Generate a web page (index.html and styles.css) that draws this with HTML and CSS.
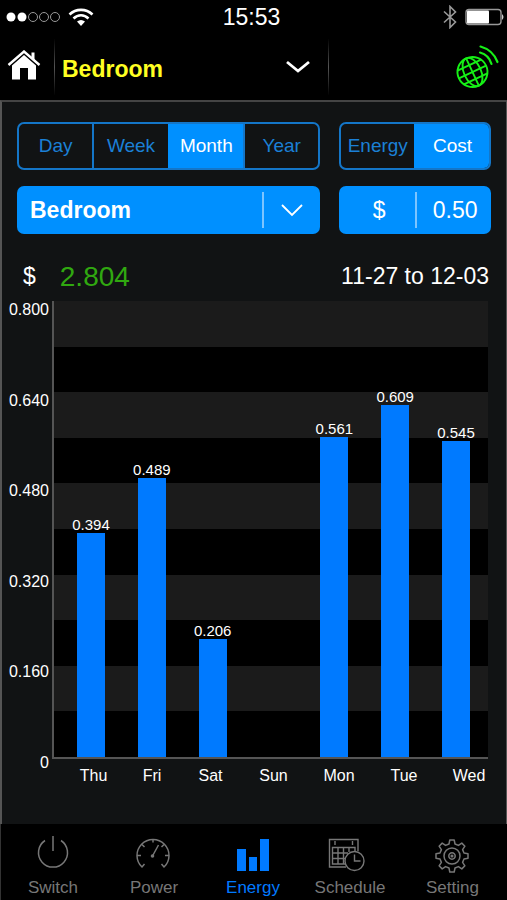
FILE: index.html
```
<!DOCTYPE html>
<html lang="en">
<head>
  <meta charset="UTF-8">
  <meta name="viewport" content="width=device-width, initial-scale=1">
  <title>Energy - Bedroom</title>
  <link rel="stylesheet" href="styles.css">
</head>
<body>
  <div class="status-bar">
    <div class="status-left">
      <svg width="54" height="12" viewBox="0 0 54 12" fill="none" stroke="#999">
        <circle cx="5" cy="6" r="4.5" fill="#fff" stroke="none"/>
        <circle cx="16" cy="6" r="4.5" fill="#fff" stroke="none"/>
        <circle cx="27" cy="6" r="4.5"/><circle cx="38" cy="6" r="4.5"/><circle cx="49" cy="6" r="4.5"/>
      </svg>
      <svg width="26" height="19" viewBox="0 0 26 19" fill="none" stroke="#fff" stroke-width="2.6">
        <path d="M1.5 6.5C8 .3 18 .3 24.5 6.5"/>
        <path d="M5.5 10.5C10 6.2 16 6.2 20.5 10.5"/>
        <path d="M9 13.5Q13 10.5 17 13.5L13 18Z" fill="#fff" stroke="none"/>
      </svg>
    </div>
    <div class="clock">15:53</div>
    <div class="status-right">
      <svg width="14" height="24" viewBox="0 0 14 24" fill="none" stroke="#999" stroke-width="1.6">
        <path d="M1 6.5L12.5 17 7 22.5V1.5L12.5 7 1 17.5"/>
      </svg>
      <svg width="40" height="18" viewBox="0 0 40 18">
        <rect x="1" y="1.5" width="35" height="15" rx="3" fill="none" stroke="#999" stroke-width="1.4"/>
        <rect x="2" y="2.5" width="22" height="13" rx="1" fill="#fff"/>
        <path d="M37 6q3 3 0 6z" fill="#ccc"/>
      </svg>
    </div>
  </div>

  <header class="header">
    <a class="home" href="#" aria-label="Home">
      <svg width="34" height="30" viewBox="0 0 34 30">
        <path d="M1.5 15L17 1.5 32.5 15" fill="none" stroke="#fff" stroke-width="2.4"/>
        <path d="M24.5 2.500h3v8l-3-2.600z" fill="#fff"/>
        <path d="M17 5L29 15.6V29.5H21V18H13V29.5H5V15.6Z" fill="#fff"/>
      </svg>
    </a>
    <div class="room">
      <select class="room-select" aria-label="Room">
        <option>Bedroom</option>
      </select>
      <svg class="room-arrow" width="24" height="14" viewBox="0 0 24 14" fill="none" stroke="#fff" stroke-width="2.8"><path d="M1 2L12 11 23 2"/></svg>
    </div>
    <button type="button" class="network" aria-label="Network">
      <svg width="44" height="46" viewBox="0 0 44 46" fill="none" stroke="#16f016" stroke-width="1.9">
        <g transform="translate(17.5 28) rotate(-25)">
          <circle r="15"/>
          <path d="M0-15V15M-15 0H15M-13-7.5H13M-13 7.5H13"/>
          <ellipse rx="8.5" ry="15"/>
        </g>
        <g stroke-width="2.2" stroke-linecap="round">
          <path d="M25 8.5Q34 11 36.5 20"/>
          <path d="M25.5 2.5Q38 6 42.5 18"/>
        </g>
      </svg>
    </button>
  </header>

  <main class="content">
    <div class="controls">
      <div class="segmented">
        <button type="button">Day</button>
        <button type="button">Week</button>
        <button type="button" class="active">Month</button>
        <button type="button">Year</button>
      </div>
      <div class="segmented">
        <button type="button">Energy</button>
        <button type="button" class="active">Cost</button>
      </div>
      <div class="picker">
        <select class="picker-select" aria-label="Device">
          <option>Bedroom</option>
        </select>
        <span class="picker-arrow">
          <svg width="22" height="13" viewBox="0 0 22 13" fill="none" stroke="#fff" stroke-width="1.8"><path d="M1 1L11 11 21 1"/></svg>
        </span>
      </div>
      <div class="price">
        <label for="price">$</label>
        <input id="price" type="text" inputmode="decimal" value="0.50">
      </div>
    </div>

    <div class="summary">
      <span class="currency">$</span>
      <span class="total">2.804</span>
      <span class="range">11-27 to 12-03</span>
    </div>

    <div class="chart">
      <div class="y-axis">
        <span>0.800</span>
        <span>0.640</span>
        <span>0.480</span>
        <span>0.320</span>
        <span>0.160</span>
        <span>0</span>
      </div>
      <div class="plot">
        <div class="bar" style="height:49.2%"><span>0.394</span></div>
        <div class="bar" style="height:61.1%"><span>0.489</span></div>
        <div class="bar" style="height:25.8%"><span>0.206</span></div>
        <div class="bar" style="height:0%"></div>
        <div class="bar" style="height:70.1%"><span>0.561</span></div>
        <div class="bar" style="height:77.2%"><span>0.609</span></div>
        <div class="bar" style="height:69.2%"><span>0.545</span></div>
      </div>
    </div>
    <div class="x-axis">
      <span>Thu</span><span>Fri</span><span>Sat</span><span>Sun</span><span>Mon</span><span>Tue</span><span>Wed</span>
    </div>
  </main>

  <nav class="tabs">
    <a href="#">
      <svg width="36" height="36" viewBox="0 0 36 36" fill="none" stroke="#777" stroke-width="1.5">
        <path d="M18 0V15M10 4.5A14.5 14.5 0 1 0 26 4.5"/>
      </svg>
      Switch
    </a>
    <a href="#">
      <svg width="36" height="36" viewBox="0 0 36 36" fill="none" stroke="#777" stroke-width="1.5">
        <path d="M8.5 28L6 31A16 16 0 1 1 28 31L25.5 28"/>
        <path d="M16.5 20L22.5 9M17 3V6.5M1 19.5H5M29 19.5H33M6 8.5L8.5 11M28 8.5L25.5 11"/>
        <circle cx="16.5" cy="20" r="1.8" fill="#777" stroke="none"/>
      </svg>
      Power
    </a>
    <a href="#" class="active">
      <svg width="36" height="36" viewBox="0 0 36 36" fill="#007aff">
        <path d="M2 13h9v22H2zM14 21h8v14h-8zM25 3h9v32h-9z"/>
      </svg>
      Energy
    </a>
    <a href="#">
      <svg width="44" height="36" viewBox="0 0 44 36" fill="none" stroke="#777" stroke-width="1.4">
        <path d="M18 31H1.5V3.5H30V15M7 5V9M24.5 5V9"/>
        <path d="M18 28H4.5V11.5H27V15M4.5 17H20M4.5 22.5H18M10 11.5V28M15.5 11.5V28M21 11.5V16"/>
        <circle cx="26.5" cy="25" r="9.5"/>
        <path d="M26.5 18.5V25H32.5"/>
      </svg>
      Schedule
    </a>
    <a href="#">
      <svg width="36" height="36" viewBox="-17 -20 36 36" fill="none" stroke="#777" stroke-width="1.5" stroke-linejoin="round" overflow="visible">
        <path d="M-3-12L-2.2-16H2.2L3-12 6.4-10.6 9.8-12.9 12.9-9.8 10.6-6.4 12-3 16-2.2V2.2L12 3 10.6 6.4 12.9 9.8 9.8 12.9 6.4 10.6 3 12 2.2 16H-2.2L-3 12-6.4 10.6-9.8 12.9-12.9 9.8-10.6 6.4-12 3-16 2.2V-2.2L-12-3-10.6-6.4-12.9-9.8-9.8-12.9-6.4-10.6Z"/>
        <circle r="8"/><circle r="3.2"/><circle r=".8"/>
      </svg>
      Setting
    </a>
  </nav>
</body>
</html>
```

FILE: styles.css
```
* { box-sizing: border-box; }
body { margin: 0; min-height: 100vh; display: flex; flex-direction: column; background: #000; color: #fff; font-family: "Liberation Sans", Arial, sans-serif; }
svg { display: block; flex: none; }
button, select, input { font: inherit; color: inherit; background: none; border: none; border-radius: 0; padding: 0; margin: 0; }
select { appearance: none; cursor: pointer; }
button { cursor: pointer; }
a { color: inherit; text-decoration: none; }

.status-bar { height: 34px; padding: 0 2px 0 6px; display: grid; grid-template-columns: 27fr auto 28fr; align-items: center; }
.status-left { display: flex; align-items: center; gap: 8px; }
.clock { font-size: 23px; }
.status-right { display: flex; align-items: center; justify-content: flex-end; gap: 8px; }

.header { height: 66px; display: flex; align-items: center; }
.home { width: 54px; padding: 0 0 4px 7px; }
.room { position: relative; width: 275px; height: 56px; border: 1px solid; border-width: 0 1px; border-image: linear-gradient(#000, #555, #000) 1; }
.room-select { width: 100%; height: 100%; padding: 4px 7px 0; color: #ff2; font-size: 23px; font-weight: bold; }
.room-arrow { position: absolute; right: 18px; top: 21px; pointer-events: none; }
.network { margin-left: auto; margin-right: 8px; }

.content { flex: 1; background: #111314; border: 1px solid #555; border-width: 2px 1px 0 2px; border-top-color: #444; padding-top: 20px; }
.controls { display: grid; grid-template-columns: 2fr 1fr; gap: 16px 19px; padding: 0 15px; }
.segmented { display: flex; height: 48px; border: 2px solid #1476c8; border-radius: 7px; overflow: hidden; }
.segmented button { flex: 1; font-size: 19px; color: #1b80d6; }
.segmented button + button { border-left: 2px solid #1476c8; }
.segmented .active { background: #0090ff; color: #fff; }
.segmented button + .active { border-left-color: #0090ff; }
.picker, .price { position: relative; display: flex; align-items: center; height: 48px; background: #0090ff; border-radius: 7px; }
.picker-select { width: 100%; height: 100%; padding: 0 13px; font-size: 23px; font-weight: bold; }
.picker-arrow { position: absolute; right: 0; top: 6px; height: 36px; width: 58px; display: flex; align-items: center; justify-content: center; border-left: 2px solid #7cc4ff; pointer-events: none; }
.price { font-size: 23px; }
.price label { flex: 1; height: 36px; line-height: 36px; padding-left: 4px; text-align: center; border-right: 2px solid #7cc4ff; }
.price input { flex: 1; width: 0; height: 36px; padding-left: 2px; text-align: center; }

.summary { display: flex; align-items: center; height: 67px; padding: 18px 17px 0 21px; font-size: 23px; }
.total { margin-left: 24px; font-size: 28px; color: #30a810; }
.range { margin-left: auto; }

.chart { display: flex; height: 458px; padding-right: 18px; font-size: 16px; }
.y-axis { width: 50px; height: 471px; padding-right: 3px; display: flex; flex-direction: column; justify-content: space-between; text-align: right; line-height: 18px; }
.plot { flex: 1; display: flex; align-items: flex-end; justify-content: space-between; padding: 0 18px 0 23px; border: 1px solid #555; border-width: 0 0 2px 2px; background: repeating-linear-gradient(#1b1b1b 0 10%, #000 10% 20%); }
.bar { width: 28px; display: flex; justify-content: center; background: #007aff; }
.bar span { height: 16px; margin-top: -16px; font-size: 15px; line-height: 16px; }
.x-axis { display: grid; grid-template-columns: 59fr 58fr 59fr 67fr 64fr 66fr 64fr; margin-left: 62px; margin-right: 5px; padding-top: 7px; height: 65px; font-size: 16px; line-height: 20px; text-align: center; }

.tabs { height: 76px; display: grid; grid-template-columns: 102fr 100fr 98fr 96fr 109fr; padding: 12px 0 0 1px; font-size: 17px; line-height: 20px; color: #777; border-left: 1px solid #333; }
.tabs a { display: flex; flex-direction: column; align-items: center; gap: 6px; }
.tabs .active { color: #007aff; }
```
